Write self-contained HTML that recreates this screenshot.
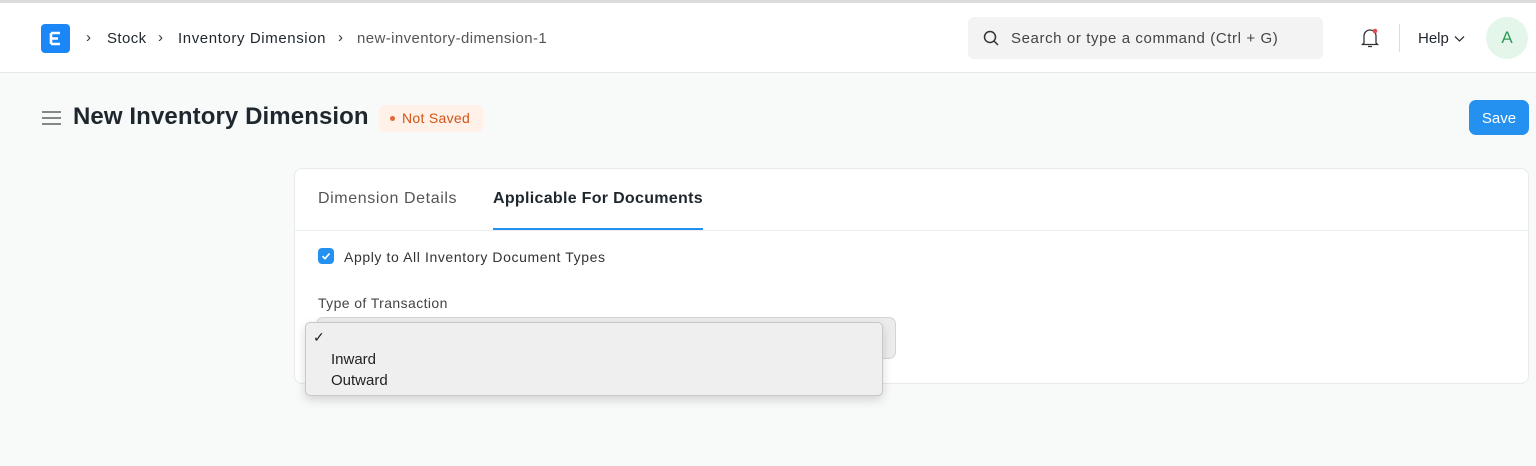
<!DOCTYPE html>
<html><head><style>
*{box-sizing:border-box;margin:0;padding:0}
body{width:1536px;height:466px;background:#f8f9f9;font-family:"Liberation Sans",sans-serif;position:relative;overflow:hidden;color:#1f272e}
.a{position:absolute;white-space:nowrap}
</style></head><body>
<div class="a" style="left:0;top:0;width:1536px;height:3px;background:#dcdcdc"></div>
<div class="a" style="left:0;top:3px;width:1536px;height:70px;background:#fff;border-bottom:1px solid #e4e6e8"></div>
<div class="a" style="left:41px;top:24px;width:29px;height:29px;background:#1b87f7;border-radius:4px"></div>
<svg class="a" style="left:48px;top:31px" width="15" height="15"><path d="M3 2H12M3 7.5H10M3 13H12M3 2V13" stroke="#fff" stroke-width="2.6" fill="none"/></svg>
<div class="a" style="left:86px;top:29px;font-size:15px;color:#333">›</div>
<div class="a" style="left:107px;top:30px;font-size:15px;color:#1f272e;letter-spacing:0.4px">Stock</div>
<div class="a" style="left:158px;top:29px;font-size:15px;color:#333">›</div>
<div class="a" style="left:178px;top:30px;font-size:15px;letter-spacing:0.6px">Inventory Dimension</div>
<div class="a" style="left:338px;top:29px;font-size:15px;color:#333">›</div>
<div class="a" style="left:357px;top:30px;font-size:15px;color:#555;letter-spacing:0.4px">new-inventory-dimension-1</div>
<div class="a" style="left:968px;top:17px;width:355px;height:42px;background:#f3f3f4;border-radius:6px"></div>
<svg class="a" style="left:983px;top:30px" width="17" height="17"><circle cx="7" cy="7" r="5.5" stroke="#333" stroke-width="1.5" fill="none"/><path d="M11 11L15 15" stroke="#333" stroke-width="1.5"/></svg>
<div class="a" style="left:1011px;top:30px;font-size:15px;color:#444;letter-spacing:0.6px">Search or type a command (Ctrl + G)</div>
<svg class="a" style="left:1360px;top:27px" width="20" height="22"><path d="M4 16V9a6 6 0 0 1 12 0v7l1.5 1.5h-15zM8 19.5h4" stroke="#333" stroke-width="1.3" fill="none"/><circle cx="15" cy="4" r="2.3" fill="#e24c4c"/></svg>
<div class="a" style="left:1399px;top:24px;width:1px;height:28px;background:#ddd"></div>
<div class="a" style="left:1418px;top:30px;font-size:15px">Help</div>
<svg class="a" style="left:1454px;top:35px" width="11" height="8"><path d="M1 1.5L5.5 6 10 1.5" stroke="#333" stroke-width="1.3" fill="none"/></svg>
<div class="a" style="left:1486px;top:17px;width:42px;height:42px;border-radius:50%;background:#e4f5e9;color:#2f9d58;font-size:17px;text-align:center;line-height:42px">A</div>
<svg class="a" style="left:41px;top:110px" width="21" height="16"><path d="M1 2H20M1 8H20M1 14H20" stroke="#777" stroke-width="1.8"/></svg>
<div class="a" style="left:73px;top:103px;font-size:24px;font-weight:bold;letter-spacing:0.1px">New Inventory Dimension</div>
<div class="a" style="left:379px;top:105px;width:104px;height:27px;background:#fff0e8;border-radius:6px;color:#d15418;font-size:14px;line-height:27px;padding-left:23px;letter-spacing:0.3px">Not Saved</div>
<div class="a" style="left:390px;top:116px;width:5px;height:5px;border-radius:50%;background:#e0683a"></div>
<div class="a" style="left:1469px;top:100px;width:60px;height:35px;background:#2490ef;border-radius:7px;color:#fff;font-size:15px;text-align:center;line-height:37px">Save</div>
<div class="a" style="left:294px;top:168px;width:1235px;height:216px;background:#fff;border:1px solid #e8e9eb;border-radius:8px"></div>
<div class="a" style="left:294px;top:230px;width:1235px;height:1px;background:#ebedef"></div>
<div class="a" style="left:318px;top:190px;font-size:16px;color:#555;letter-spacing:0.6px">Dimension Details</div>
<div class="a" style="left:493px;top:190px;font-size:16px;font-weight:bold;color:#1f272e;letter-spacing:0.3px">Applicable For Documents</div>
<div class="a" style="left:493px;top:228px;width:210px;height:2px;background:#2490ef"></div>
<div class="a" style="left:318px;top:248px;width:16px;height:16px;border-radius:4px;background:#2490ef"></div>
<svg class="a" style="left:318px;top:248px" width="16" height="16"><path d="M4.5 8.3L7 10.7 11.5 5.5" stroke="#fff" stroke-width="1.7" fill="none"/></svg>
<div class="a" style="left:344px;top:249px;font-size:14px;color:#333;letter-spacing:0.6px">Apply to All Inventory Document Types</div>
<div class="a" style="left:318px;top:295px;font-size:14px;color:#444;letter-spacing:0.4px">Type of Transaction</div>
<div class="a" style="left:316px;top:317px;width:580px;height:42px;background:#ececec;border:1px solid #d4d4d4;border-radius:7px"></div>
<div class="a" style="left:305px;top:322px;width:578px;height:74px;background:#efefef;border:1px solid #c8c8c8;border-radius:5px;box-shadow:0 4px 10px rgba(0,0,0,.15)"></div>
<div class="a" style="left:313px;top:329px;font-size:14px;color:#222">✓</div>
<div class="a" style="left:331px;top:351px;font-size:15px;color:#222">Inward</div>
<div class="a" style="left:331px;top:372px;font-size:15px;color:#222">Outward</div>
</body></html>
